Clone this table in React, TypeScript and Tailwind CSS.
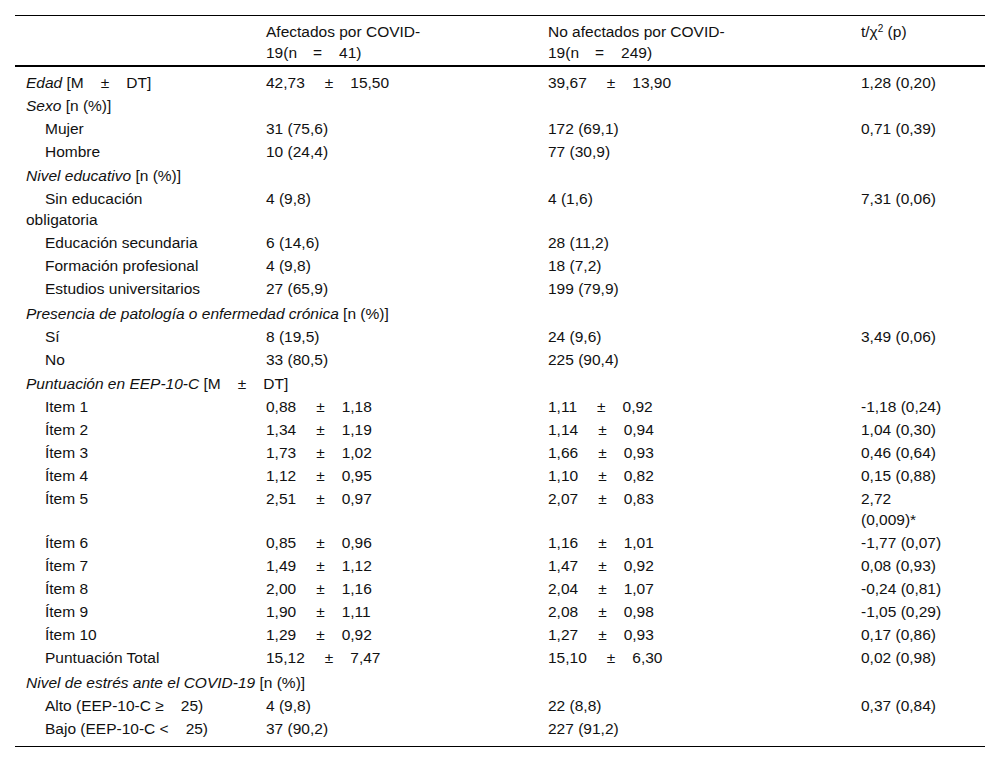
import React from 'react';

type Row =
  | { kind: 'section'; title: string; unit: React.ReactNode; top?: string; cells?: [React.ReactNode, React.ReactNode, React.ReactNode] }
  | { kind: 'item'; label: React.ReactNode; cells: [React.ReactNode, React.ReactNode, React.ReactNode] };

const Gap = () => <span className="inline-block w-[17px]" />;

// mean ± sd, with the wide spacing the source uses
const pm = (m: string, sd: string) => (
  <>
    {m}
    <span className="inline-block w-[20px]" />±
    <span className="inline-block w-[17px]" />
    {sd}
  </>
);

const MDT = (
  <>
    [M<Gap />±<Gap />DT]
  </>
);

const rows: Row[] = [
  { kind: 'section', title: 'Edad', unit: MDT, top: 'pt-[5px]', cells: [pm('42,73', '15,50'), pm('39,67', '13,90'), '1,28 (0,20)'] },
  { kind: 'section', title: 'Sexo', unit: '[n (%)]', top: 'pt-px' },
  { kind: 'item', label: 'Mujer', cells: ['31 (75,6)', '172 (69,1)', '0,71 (0,39)'] },
  { kind: 'item', label: 'Hombre', cells: ['10 (24,4)', '77 (30,9)', ''] },
  { kind: 'section', title: 'Nivel educativo', unit: '[n (%)]', top: 'pt-[2px]' },
  { kind: 'item', label: <>Sin educación<br />obligatoria</>, cells: ['4 (9,8)', '4 (1,6)', '7,31 (0,06)'] },
  { kind: 'item', label: 'Educación secundaria', cells: ['6 (14,6)', '28 (11,2)', ''] },
  { kind: 'item', label: 'Formación profesional', cells: ['4 (9,8)', '18 (7,2)', ''] },
  { kind: 'item', label: 'Estudios universitarios', cells: ['27 (65,9)', '199 (79,9)', ''] },
  { kind: 'section', title: 'Presencia de patología o enfermedad crónica', unit: '[n (%)]', top: 'pt-[3px]' },
  { kind: 'item', label: 'Sí', cells: ['8 (19,5)', '24 (9,6)', '3,49 (0,06)'] },
  { kind: 'item', label: 'No', cells: ['33 (80,5)', '225 (90,4)', ''] },
  { kind: 'section', title: 'Puntuación en EEP-10-C', unit: MDT, top: 'pt-[2px]' },
  { kind: 'item', label: 'Item 1', cells: [pm('0,88', '1,18'), pm('1,11', '0,92'), '-1,18 (0,24)'] },
  { kind: 'item', label: 'Ítem 2', cells: [pm('1,34', '1,19'), pm('1,14', '0,94'), '1,04 (0,30)'] },
  { kind: 'item', label: 'Ítem 3', cells: [pm('1,73', '1,02'), pm('1,66', '0,93'), '0,46 (0,64)'] },
  { kind: 'item', label: 'Ítem 4', cells: [pm('1,12', '0,95'), pm('1,10', '0,82'), '0,15 (0,88)'] },
  { kind: 'item', label: 'Ítem 5', cells: [pm('2,51', '0,97'), pm('2,07', '0,83'), <>2,72<br />(0,009)*</>] },
  { kind: 'item', label: 'Ítem 6', cells: [pm('0,85', '0,96'), pm('1,16', '1,01'), '-1,77 (0,07)'] },
  { kind: 'item', label: 'Ítem 7', cells: [pm('1,49', '1,12'), pm('1,47', '0,92'), '0,08 (0,93)'] },
  { kind: 'item', label: 'Ítem 8', cells: [pm('2,00', '1,16'), pm('2,04', '1,07'), '-0,24 (0,81)'] },
  { kind: 'item', label: 'Ítem 9', cells: [pm('1,90', '1,11'), pm('2,08', '0,98'), '-1,05 (0,29)'] },
  { kind: 'item', label: 'Ítem 10', cells: [pm('1,29', '0,92'), pm('1,27', '0,93'), '0,17 (0,86)'] },
  { kind: 'item', label: 'Puntuación Total', cells: [pm('15,12', '7,47'), pm('15,10', '6,30'), '0,02 (0,98)'] },
  { kind: 'section', title: 'Nivel de estrés ante el COVID-19', unit: '[n (%)]', top: 'pt-[3px]' },
  { kind: 'item', label: <>Alto (EEP-10-C ≥<Gap />25)</>, cells: ['4 (9,8)', '22 (8,8)', '0,37 (0,84)'] },
  { kind: 'item', label: <>Bajo (EEP-10-C &lt;<Gap />25)</>, cells: ['37 (90,2)', '227 (91,2)', ''] },
];

const td = 'pl-[11px] pr-2 align-top whitespace-nowrap';

export default function App() {
  return (
    <div className="min-h-[762px] w-[1000px] bg-white px-[15px] pt-[15px] text-[15.5px] leading-[21px] text-[#111] [font-family:'Liberation_Sans',Arial,sans-serif]">
      <table className="w-[970px] table-fixed border-collapse border-t border-b border-black">
        <colgroup>
          <col className="w-[240px]" />
          <col className="w-[282px]" />
          <col className="w-[313px]" />
          <col className="w-[135px]" />
        </colgroup>
        <thead>
          <tr className="border-b-2 border-black">
            <th className="pb-[2px] pt-[5px]" />
            <th className={`${td} pb-[2px] pt-[5px] text-left font-normal`}>
              Afectados por COVID-
              <br />
              19(n<span className="inline-block w-[16px]" />=<span className="inline-block w-[17px]" />41)
            </th>
            <th className={`${td} pb-[2px] pt-[5px] text-left font-normal`}>
              No afectados por COVID-
              <br />
              19(n<span className="inline-block w-[16px]" />=<span className="inline-block w-[17px]" />249)
            </th>
            <th className={`${td} pb-[2px] pt-[5px] text-left font-normal`}>
              t/χ<sup className="text-[10px]">2</sup> (p)
            </th>
          </tr>
        </thead>
        <tbody>
          {rows.map((r, i) => {
            const last = i === rows.length - 1;
            const pt = r.kind === 'section' ? r.top : 'pt-px';
            const pb = last ? 'pb-[7px]' : 'pb-px';
            const cls = `${td} ${pt} ${pb}`;
            if (r.kind === 'section') {
              const label = (
                <>
                  <i>{r.title}</i> {r.unit}
                </>
              );
              if (!r.cells) {
                return (
                  <tr key={i}>
                    <td colSpan={4} className={cls}>
                      {label}
                    </td>
                  </tr>
                );
              }
              return (
                <tr key={i}>
                  <td className={cls}>{label}</td>
                  {r.cells.map((c, j) => (
                    <td key={j} className={cls}>
                      {c}
                    </td>
                  ))}
                </tr>
              );
            }
            return (
              <tr key={i}>
                <td className={`${cls} indent-[19px]`}>{r.label}</td>
                {r.cells.map((c, j) => (
                  <td key={j} className={cls}>
                    {c}
                  </td>
                ))}
              </tr>
            );
          })}
        </tbody>
      </table>
    </div>
  );
}
